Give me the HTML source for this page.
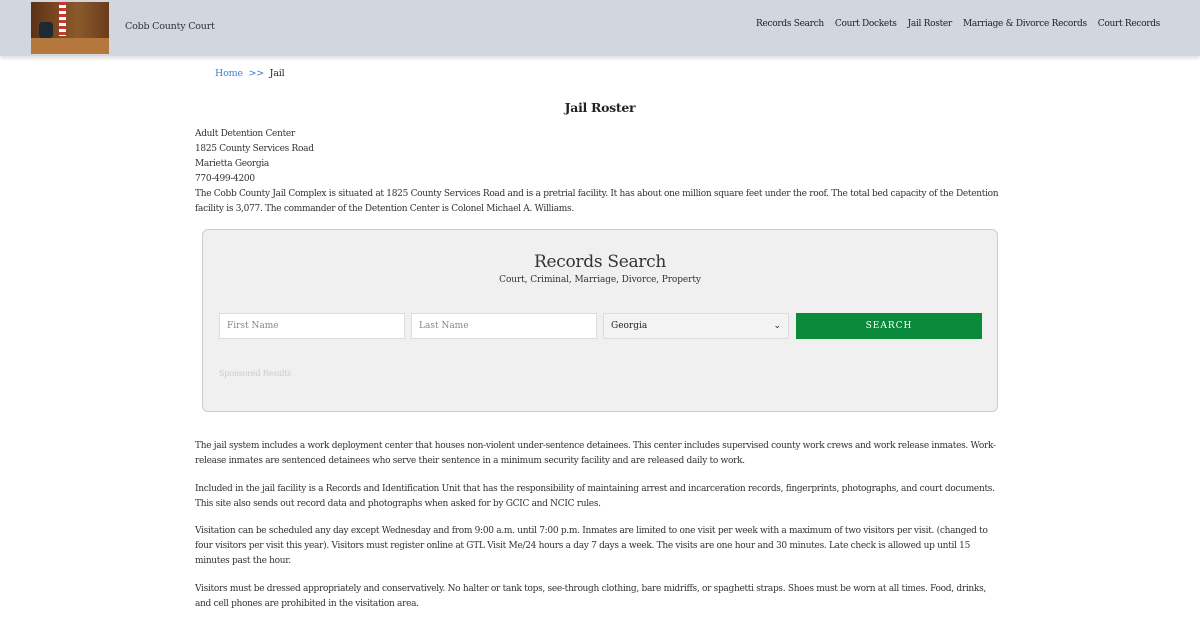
<!DOCTYPE html>
<html><head><meta charset="utf-8"><style>
body{margin:0;background:#fff;font-family:"DejaVu Serif","Liberation Serif",serif;color:#222;width:1200px;height:620px;overflow:hidden}
.hdr{height:56px;background:#d0d7de;position:relative;box-shadow:0 2px 4px rgba(0,0,0,.15)}
.logo{position:absolute;left:31px;top:2px;width:78px;height:52px;background:linear-gradient(90deg,#5a3218 0%,#7a4520 30%,#8b5a2b 60%,#6a3c1c 100%)}
.logo:before{content:"";position:absolute;left:8px;top:20px;width:14px;height:16px;background:#1d2a33;border-radius:3px}
.logo:after{content:"";position:absolute;left:28px;top:0;width:7px;height:34px;background:repeating-linear-gradient(#c33 0 3px,#fff 3px 6px)}
.desk{position:absolute;left:0;bottom:0;width:78px;height:16px;background:#b4773c}
.brand{position:absolute;left:125px;top:21px;font-size:9.5px;color:#333;letter-spacing:-0.2px}
.nav{position:absolute;right:40px;top:19px;font-size:9px;letter-spacing:-0.3px;color:#222}
.nav span{margin-left:11px}
.bc{position:absolute;left:215px;top:68px;font-size:9.5px;letter-spacing:-0.2px}
.bc a{color:#3b82d6}
h1{position:absolute;left:0;width:1200px;top:100px;margin:0;text-align:center;font-size:12.5px;font-weight:bold;letter-spacing:-0.3px}
.txt{position:absolute;left:195px;width:830px;font-size:9px;letter-spacing:-0.3px;line-height:15px;color:#333;white-space:nowrap}
.box{position:absolute;left:202px;top:229px;width:794px;height:181px;background:#f0f0f0;border:1px solid #ccc;border-radius:6px}
.box .t{position:absolute;top:22px;width:100%;text-align:center;font-size:17px;color:#333;letter-spacing:-0.3px}
.box .s{position:absolute;top:45px;width:100%;text-align:center;font-size:9px;letter-spacing:-0.1px;color:#333}
.in{position:absolute;top:83px;height:26px;width:186px;background:#fff;border:1px solid #ddd;box-sizing:border-box;font-size:9px;color:#888;padding:7px 7px}
.btn{position:absolute;left:593px;top:83px;width:186px;height:26px;background:#0a8a3a;color:#fff;font-size:9px;letter-spacing:1px;text-align:center;line-height:26px}
.sp{position:absolute;left:16px;top:139px;font-size:8px;color:#ccc;letter-spacing:-0.2px}
</style></head><body>
<div class="hdr"><div class="logo"><div class="desk"></div></div><div class="brand">Cobb County Court</div>
<div class="nav"><span>Records Search</span><span>Court Dockets</span><span>Jail Roster</span><span>Marriage &amp; Divorce Records</span><span>Court Records</span></div></div>
<div class="bc"><a>Home</a> <a>&nbsp;&gt;&gt;&nbsp;</a> Jail</div>
<h1>Jail Roster</h1>
<div class="txt" style="top:127px">Adult Detention Center<br>1825 County Services Road<br>Marietta Georgia<br>770-499-4200<br>The Cobb County Jail Complex is situated at 1825 County Services Road and is a pretrial facility. It has about one million square feet under the roof. The total bed capacity of the Detention<br>facility is 3,077. The commander of the Detention Center is Colonel Michael A. Williams.</div>
<div class="box"><div class="t">Records Search</div><div class="s">Court, Criminal, Marriage, Divorce, Property</div>
<div class="in" style="left:16px">First Name</div><div class="in" style="left:208px">Last Name</div>
<div class="in" style="left:400px;background:#f3f3f3;color:#222">Georgia<span style="float:right">⌄</span></div>
<div class="btn">SEARCH</div><div class="sp">Sponsored Results</div></div>
<div class="txt" style="top:439px">The jail system includes a work deployment center that houses non-violent under-sentence detainees. This center includes supervised county work crews and work release inmates. Work-<br>release inmates are sentenced detainees who serve their sentence in a minimum security facility and are released daily to work.</div>
<div class="txt" style="top:482px">Included in the jail facility is a Records and Identification Unit that has the responsibility of maintaining arrest and incarceration records, fingerprints, photographs, and court documents.<br>This site also sends out record data and photographs when asked for by GCIC and NCIC rules.</div>
<div class="txt" style="top:524px">Visitation can be scheduled any day except Wednesday and from 9:00 a.m. until 7:00 p.m. Inmates are limited to one visit per week with a maximum of two visitors per visit. (changed to<br>four visitors per visit this year). Visitors must register online at GTL Visit Me/24 hours a day 7 days a week. The visits are one hour and 30 minutes. Late check is allowed up until 15<br>minutes past the hour.</div>
<div class="txt" style="top:582px">Visitors must be dressed appropriately and conservatively. No halter or tank tops, see-through clothing, bare midriffs, or spaghetti straps. Shoes must be worn at all times. Food, drinks,<br>and cell phones are prohibited in the visitation area.</div>
</body></html>
